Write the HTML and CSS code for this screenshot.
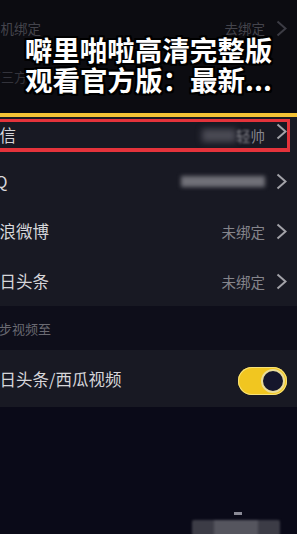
FILE: index.html
```html
<!DOCTYPE html>
<html lang="zh-CN">
<head>
	<meta charset="UTF-8">
	<title>账号绑定</title>
	<meta name="viewport" content="width=device-width,initial-scale=1">
	<link rel="stylesheet" href="styles.css">
</head>
<body>
	<div class="page">
		<div class="top">
			<div class="row dim">
				<span class="label">手机绑定</span>
				<span class="value">去绑定</span>
				<svg class="arrow" width="11" height="17" viewBox="0 0 11 17"><polyline points="1.5,1.5 9.5,8.5 1.5,15.5" fill="none" stroke="#3c3c44" stroke-width="2"/></svg>
			</div>
			<div class="sub dim">
				<span class="label">第三方账号绑定</span>
			</div>
		</div>
		<div class="bar"></div>
		<div class="list">
			<div class="row first">
				<span class="label">微信</span>
				<span class="value"><i class="blur"></i><em class="soft">轻</em>帅</span>
				<svg class="arrow" width="11" height="17" viewBox="0 0 11 17"><polyline points="1.5,1.5 9.5,8.5 1.5,15.5" fill="none" stroke="#a2a2a8" stroke-width="2"/></svg>
			</div>
			<div class="row">
				<span class="label">QQ</span>
				<span class="value"><i class="blur long"></i></span>
				<svg class="arrow" width="11" height="17" viewBox="0 0 11 17"><polyline points="1.5,1.5 9.5,8.5 1.5,15.5" fill="none" stroke="#a2a2a8" stroke-width="2"/></svg>
			</div>
			<div class="row">
				<span class="label">新浪微博</span>
				<span class="value">未绑定</span>
				<svg class="arrow" width="11" height="17" viewBox="0 0 11 17"><polyline points="1.5,1.5 9.5,8.5 1.5,15.5" fill="none" stroke="#a2a2a8" stroke-width="2"/></svg>
			</div>
			<div class="row">
				<span class="label">今日头条</span>
				<span class="value">未绑定</span>
				<svg class="arrow" width="11" height="17" viewBox="0 0 11 17"><polyline points="1.5,1.5 9.5,8.5 1.5,15.5" fill="none" stroke="#a2a2a8" stroke-width="2"/></svg>
			</div>
			<div class="sub">
				<span class="label">同步视频至</span>
			</div>
			<div class="row tall">
				<span class="label">今日头条/西瓜视频</span>
				<span class="switch"><i></i></span>
			</div>
		</div>
		<div class="bottom"></div>

		<div class="mark"></div>
		<div class="title">噼里啪啦高清完整版<br>观看官方版：最新...</div>
		<div class="float"><i class="dots"></i><i class="box"></i></div>
	</div>
</body>
</html>
```

FILE: styles.css
```css
*{
	padding:0;
	margin:0;
}
body{
	background-color:#0a0a18;
	font-family:"Noto Sans CJK SC", "Noto Sans", sans-serif;
}
.page{
	position:relative;
	width:297px;
	height:534px;
	overflow:hidden;
	background-color:#0a0a18;
}
.top{
	height:113px;
	background-color:#0c0c11;
}
.row{
	display:flex;
	align-items:center;
	height:50px;
	padding-right:10px;
}
.row .label{
	margin-left:-17px;
	font-size:16.5px;
	color:#d6d6da;
	white-space:nowrap;
}
.row .value{
	margin-left:auto;
	margin-right:11px;
	font-size:14.5px;
	color:#85858c;
	display:flex;
	align-items:center;
}
.top .row{
	height:56px;
}
.top .row .label,.top .row .value{
	font-size:13.5px;
	color:#44444c;
}
.top .row .label{
	margin-left:-13px;
}
.sub{
	display:flex;
	align-items:center;
	height:44px;
	background-color:#0e0e1a;
}
.sub .label{
	margin-left:-14px;
	font-size:13px;
	color:#6a6a72;
}
.top .sub{
	height:40px;
	background-color:transparent;
}
.top .sub .label{
	margin-left:-12px;
	color:#33333b;
}
.bar{
	height:4px;
	background-color:#f3c235;
}
.list{
	background-color:#181923;
}
.list .row.first{
	height:39px;
	align-items:flex-start;
	padding-top:3px;
	box-sizing:border-box;
}
.list .row.first .label,.list .row.first .arrow{
	margin-top:3px;
}
.list .row.first .value{
	margin-top:5px;
}
.row.tall{
	height:57px;
}
.blur{
	display:inline-block;
	width:34px;
	height:13px;
	background-color:#4a4a54;
	filter:blur(3px);
}
.blur.long{
	width:84px;
	height:11px;
	background-color:#707078;
	filter:blur(2px);
}
.soft{
	font-style:normal;
	filter:blur(1px);
}
.arrow{
	display:block;
	flex-shrink:0;
}
.switch{
	margin-left:auto;
	margin-top:5px;
	position:relative;
	width:49px;
	height:28px;
	border-radius:14px;
	background-color:#f1c620;
	box-shadow:inset 0 0 0 1px #f7e27a;
}
.switch i{
	position:absolute;
	right:2px;
	top:2px;
	width:20px;
	height:20px;
	border-radius:50%;
	background-color:#15162c;
	border:2px solid #e9dc9a;
}
.bottom{
	height:127px;
	background-color:#0a0a18;
}
.mark{
	position:absolute;
	left:-10px;
	top:119px;
	width:294px;
	height:26px;
	border:3px solid #e4333b;
	border-bottom-width:4px;
}
.title{
	position:absolute;
	left:0;
	right:0;
	top:34px;
	text-align:center;
	font-size:27.5px;
	line-height:30px;
	font-weight:700;
	color:#fff;
	text-shadow:
		-2px 0 0 #000, 2px 0 0 #000, 0 -2px 0 #000, 0 2px 0 #000,
		-2px -2px 0 #000, 2px 2px 0 #000, -2px 2px 0 #000, 2px -2px 0 #000;
}
.float{
	position:absolute;
	left:192px;
	top:510px;
	width:88px;
	height:24px;
}
.float .dots{
	position:absolute;
	left:42px;
	top:2px;
	width:8px;
	height:3px;
	background-color:#8a8a96;
	filter:blur(0.6px);
}
.float .box{
	position:absolute;
	left:0;
	top:10px;
	width:88px;
	height:16px;
	border-radius:2px;
	background:linear-gradient(to right,#3c3c46 0,#3c3c46 24%,#55555e 26%,#55555e 74%,#3c3c46 76%);
	filter:blur(0.8px);
}
```
